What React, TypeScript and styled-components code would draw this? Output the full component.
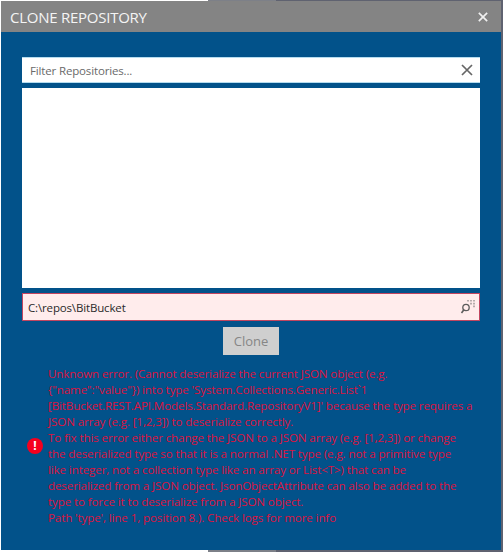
import React from "react";
import styled, { createGlobalStyle } from "styled-components";

const GlobalStyle = createGlobalStyle`
  html, body {
    margin: 0;
    padding: 0;
    background: #6f7480;
  }
  body {
    width: 503px;
    height: 552px;
    overflow: hidden;
    font-family: "Open Sans", "Noto Sans", sans-serif;
  }
`;

const Backdrop = styled.div`
  width: 503px;
  height: 552px;
  box-sizing: border-box;
  padding: 1px 2px 2px 1px;
  background: linear-gradient(to right, #ffffff 0, #ffffff 208px, #7d8088 208px, #7d8088 276px, #5f6270 276px);
`;

const Dialog = styled.div`
  height: 100%;
  display: flex;
  flex-direction: column;
  background: #02528a;
`;

const TitleBar = styled.div`
  height: 31px;
  flex: none;
  display: flex;
  align-items: center;
  justify-content: space-between;
  padding: 0 13px 0 9px;
  background: #848484;
  color: #f4f4f4;
`;

const Title = styled.span`
  font-size: 15px;
  letter-spacing: -0.25px;
`;

const Content = styled.div`
  flex: 1;
  display: flex;
  flex-direction: column;
  padding: 25px 21px 0 21px;
`;

const FilterBox = styled.div`
  height: 26px;
  box-sizing: border-box;
  flex: none;
  display: flex;
  align-items: center;
  justify-content: space-between;
  padding: 0 7px 0 8px;
  background: #fff;
  border: 1px solid #b5dcef;
  border-width: 1px 0 1px 0;
  color: #6a6a6a;
  font-size: 11.5px;
  letter-spacing: -0.15px;
`;

const RepoList = styled.div`
  height: 200px;
  flex: none;
  margin-top: 5px;
  background: #fff;
`;

const PathBox = styled.div`
  height: 28px;
  box-sizing: border-box;
  flex: none;
  margin-top: 5px;
  display: flex;
  align-items: center;
  justify-content: space-between;
  padding: 0 3px 0 5px;
  background: #ffecec;
  border: 1px solid #c2455f;
  color: #2a2a2a;
  font-size: 11.5px;
  letter-spacing: -0.15px;
`;

const CloneButton = styled.button`
  align-self: center;
  width: 56px;
  height: 28px;
  margin-top: 6px;
  padding: 0;
  border: none;
  background: #cfcfcf;
  color: #868686;
  font-family: inherit;
  font-size: 13px;
`;

const ErrorRow = styled.div`
  display: flex;
  align-items: center;
  gap: 5px;
  margin-top: 11px;
  padding-left: 5px;
`;

const ErrorIcon = styled.span`
  width: 16px;
  height: 16px;
  flex: none;
  border-radius: 50%;
  display: flex;
  align-items: center;
  justify-content: center;
  background: #f5001e;
  color: #fff;
  font-size: 12px;
  font-weight: 700;
  line-height: 1;
`;

const ErrorText = styled.div`
  width: 430px;
  color: #dc1240;
  font-size: 11.6px;
  line-height: 16px;
  letter-spacing: -0.12px;
  white-space: pre;
`;

const errorLines = [
  "Unknown error. (Cannot deserialize the current JSON object (e.g.",
  '{"name":"value"}) into type \'System.Collections.Generic.List`1',
  "[BitBucket.REST.API.Models.Standard.RepositoryV1]' because the type requires a",
  "JSON array (e.g. [1,2,3]) to deserialize correctly.",
  "To fix this error either change the JSON to a JSON array (e.g. [1,2,3]) or change",
  "the deserialized type so that it is a normal .NET type (e.g. not a primitive type",
  "like integer, not a collection type like an array or List<T>) that can be",
  "deserialized from a JSON object. JsonObjectAttribute can also be added to the",
  "type to force it to deserialize from a JSON object.",
  "Path 'type', line 1, position 8.). Check logs for more info",
];

const CloseIcon = ({ size, color, width }: { size: number; color: string; width: number }) => (
  <svg width={size} height={size} viewBox="0 0 12 12" aria-hidden="true">
    <path d="M1 1L11 11M11 1L1 11" stroke={color} strokeWidth={width} fill="none" />
  </svg>
);

const BrowseIcon = () => (
  <svg width="16" height="16" viewBox="0 0 16 16" aria-hidden="true">
    <circle cx="6" cy="8.500" r="3.200" fill="none" stroke="#5c5c5c" strokeWidth="1.300" />
    <path d="M3.700 11L1.500 14" stroke="#5c5c5c" strokeWidth="1.600" fill="none" />
    <path d="M7 1h2v1.600H7zM10 1h2v1.600h-2zM13 1h2v1.600h-2zM10 3.800h2v1.600h-2zM13 3.800h2v1.600h-2zM13 6.600h2v1.600h-2z" fill="#b5abab" />
  </svg>
);

export default function App() {
  return (
    <>
      <GlobalStyle />
      <Backdrop>
        <Dialog>
          <TitleBar>
            <Title>CLONE REPOSITORY</Title>
            <CloseIcon size={10} color="#f0f0f0" width={2} />
          </TitleBar>
          <Content>
            <FilterBox>
              Filter Repositories...
              <CloseIcon size={12} color="#666" width={1.700} />
            </FilterBox>
            <RepoList />
            <PathBox>
              C:\repos\BitBucket
              <BrowseIcon />
            </PathBox>
            <CloneButton type="button" disabled>
              Clone
            </CloneButton>
            <ErrorRow>
              <ErrorIcon>!</ErrorIcon>
              <ErrorText>{errorLines.join("\n")}</ErrorText>
            </ErrorRow>
          </Content>
        </Dialog>
      </Backdrop>
    </>
  );
}
